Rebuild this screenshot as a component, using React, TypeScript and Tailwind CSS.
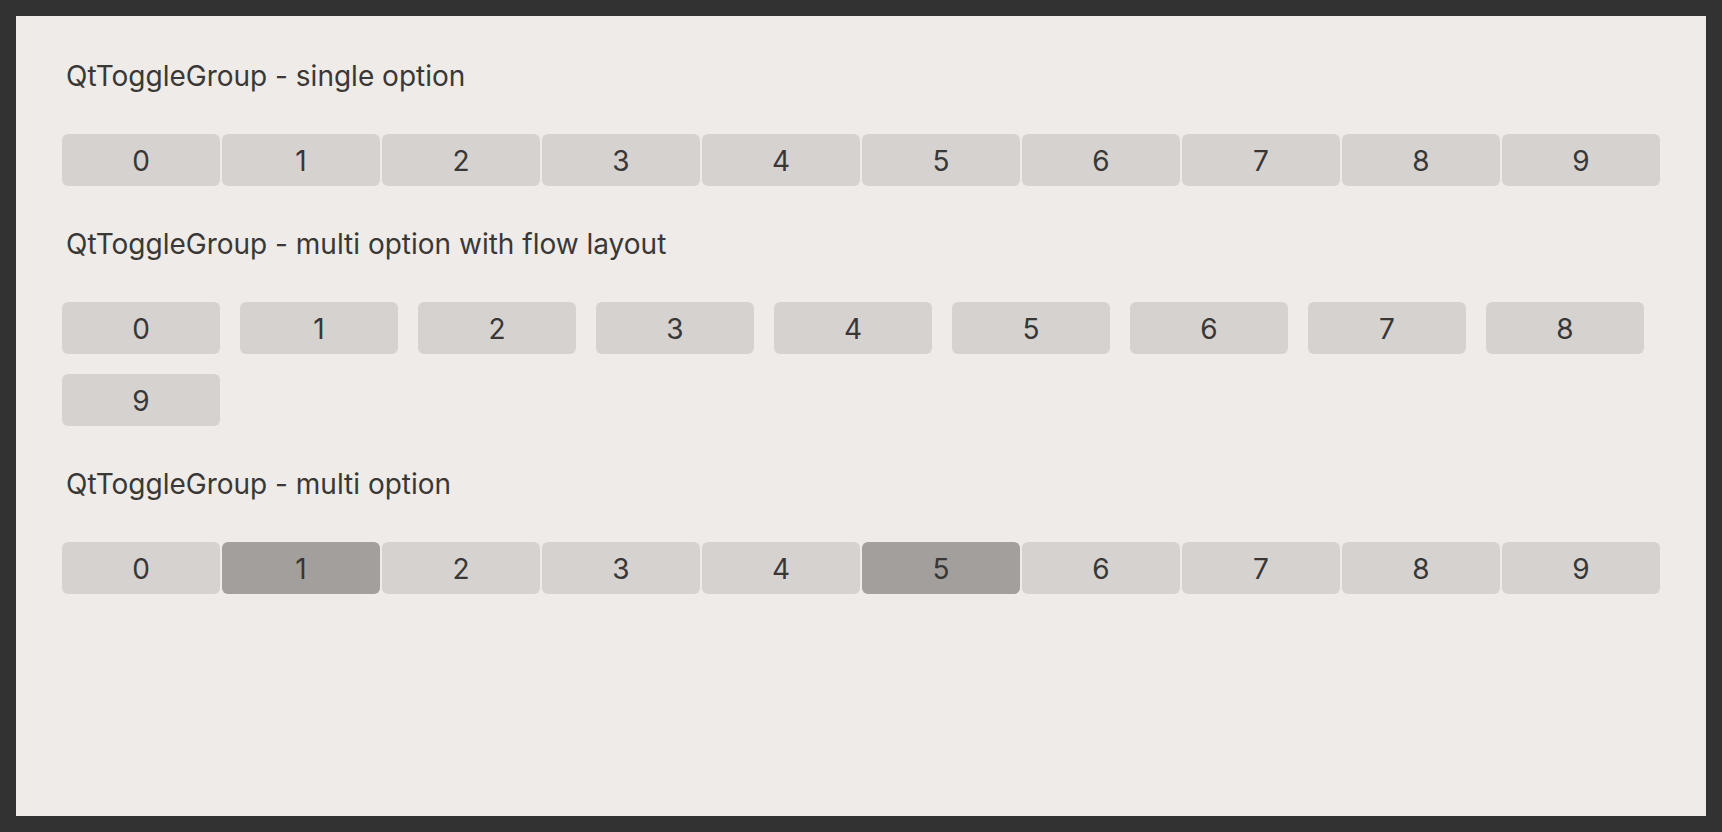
import { useState } from 'react';

const digits = ['0', '1', '2', '3', '4', '5', '6', '7', '8', '9'];

function Title({ children, first }: { children: string; first?: boolean }) {
  return (
    <div className={`${first ? '' : 'mt-[41px]'} mb-[41px] pl-[4px] h-[34px] text-[28px] leading-[34px] text-[#3a3837]`}>
      {children}
    </div>
  );
}

function ToggleButton({ label, on, onClick }: { label: string; on: boolean; onClick: () => void }) {
  return (
    <button
      onClick={onClick}
      className={`w-[158px] h-[52px] shrink-0 rounded-[6px] pt-[2px] text-[28px] leading-none text-[#393736] flex items-center justify-center ${
        on ? 'bg-[#a39f9c]' : 'bg-[#d6d2cf]'
      }`}
    >
      {label}
    </button>
  );
}

export default function App() {
  const [single, setSingle] = useState<string | null>(null);
  const [flow, setFlow] = useState<string[]>([]);
  const [multi, setMulti] = useState<string[]>(['1', '5']);

  const toggle = (list: string[], d: string) =>
    list.includes(d) ? list.filter((x) => x !== d) : [...list, d];

  return (
    <div className="h-screen bg-[#323232] p-[16px] font-['Inter','Liberation_Sans',sans-serif]">
      <div className="h-full bg-[#eeebe8] px-[46px] pt-[43px]">
        <Title first>QtToggleGroup - single option</Title>
        <div className="flex gap-[2px]">
          {digits.map((d) => (
            <ToggleButton key={d} label={d} on={single === d} onClick={() => setSingle(d)} />
          ))}
        </div>

        <Title>QtToggleGroup - multi option with flow layout</Title>
        <div className="flex flex-wrap gap-[20px]">
          {digits.map((d) => (
            <ToggleButton key={d} label={d} on={flow.includes(d)} onClick={() => setFlow(toggle(flow, d))} />
          ))}
        </div>

        <Title>QtToggleGroup - multi option</Title>
        <div className="flex gap-[2px]">
          {digits.map((d) => (
            <ToggleButton key={d} label={d} on={multi.includes(d)} onClick={() => setMulti(toggle(multi, d))} />
          ))}
        </div>
      </div>
    </div>
  );
}
